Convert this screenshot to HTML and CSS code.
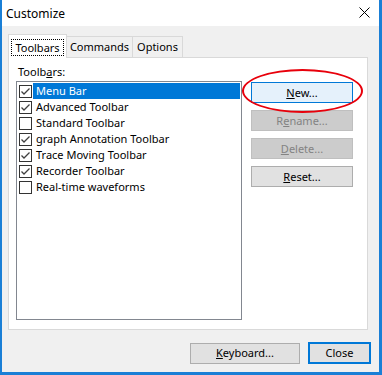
FILE: index.html
```html
<!DOCTYPE html>
<html lang="en">
<head>
    <meta charset="UTF-8">
    <title>Customize</title>
    <link rel="stylesheet" href="styles.css">
</head>
<body>

<div class="dialog">
    <div class="titlebar">
        <span class="title">Customize</span>
        <svg class="close-x" width="11" height="11" viewBox="0 0 11 11">
            <path d="M0.5 0.5 L10.5 10.5 M10.5 0.5 L0.5 10.5" stroke="#000" stroke-width="1" fill="none"/>
        </svg>
    </div>

    <div class="client">
        <div class="tabs">
            <div class="tab active"><span class="focus">Toolbars</span></div>
            <div class="tab">Commands</div>
            <div class="tab">Options</div>
        </div>

        <div class="page">
            <div class="label">Toolb<u>a</u>rs:</div>
            <div class="page-row">
                <div class="listbox">
                    <div class="item selected"><span class="check on"></span><span class="text">Menu Bar</span></div>
                    <div class="item"><span class="check on"></span><span class="text">Advanced Toolbar</span></div>
                    <div class="item"><span class="check"></span><span class="text">Standard Toolbar</span></div>
                    <div class="item"><span class="check on"></span><span class="text">graph Annotation Toolbar</span></div>
                    <div class="item"><span class="check on"></span><span class="text">Trace Moving Toolbar</span></div>
                    <div class="item"><span class="check on"></span><span class="text">Recorder Toolbar</span></div>
                    <div class="item"><span class="check"></span><span class="text">Real-time waveforms</span></div>
                </div>

                <div class="side">
                    <div class="marked">
                        <button class="btn btn-hot"><u>N</u>ew...</button>
                        <span class="ring"></span>
                    </div>
                    <button class="btn" disabled>R<u>e</u>name...</button>
                    <button class="btn" disabled><u>D</u>elete...</button>
                    <button class="btn"><u>R</u>eset...</button>
                </div>
            </div>
        </div>

        <div class="footer">
            <button class="btn btn-keys"><u>K</u>eyboard...</button>
            <button class="btn btn-close">Close</button>
        </div>
    </div>
</div>

</body>
</html>
```

FILE: styles.css
```css
body{
    margin: 0;
    background-color: #fff;
    font-family: "Noto Sans", sans-serif;
    font-size: 11px;
    color: #000;
}

.dialog{
    width: 382px;
    height: 375px;
    box-sizing: border-box;
    border: solid #1a7fd6;
    border-width: 0 3px 3px 2px;
    background-color: #f0f0f0;
    display: flex;
    flex-direction: column;
}

.titlebar{
    height: 26px;
    background-color: #fff;
    display: flex;
    align-items: center;
    justify-content: space-between;
    padding: 0 9px 0 4px;
}

.title{
    font-size: 12px;
}

.close-x{
    margin-top: -1px;
}

.client{
    padding: 8px 0 0 6px;
}

/* tabs */
.tabs{
    display: flex;
    align-items: flex-end;
    position: relative;
    z-index: 1;
    margin-bottom: -1px;
}

.tab{
    height: 21px;
    box-sizing: border-box;
    border: 1px solid #d9d9d9;
    border-left: none;
    border-bottom: none;
    margin-bottom: 1px;
    line-height: 20px;
    text-align: center;
    background-color: #f0f0f0;
}

.tab:nth-child(2){
    width: 66px;
}

.tab:nth-child(3){
    width: 50px;
}

.tab.active{
    width: 59px;
    height: 24px;
    margin-bottom: 0;
    border-left: 1px solid #d9d9d9;
    background-color: #fff;
    line-height: 15px;
}

.focus{
    display: inline-block;
    margin-top: 4px;
    padding: 0 3px 0 3px;
    border: 1px dotted #000;
}

/* page */
.page{
    width: 360px;
    height: 273px;
    box-sizing: border-box;
    border: 1px solid #d9d9d9;
    background-color: #fff;
    padding: 6px 0 0 7px;
}

.label{
    height: 16px;
    line-height: 16px;
    padding-left: 2px;
    margin-bottom: 1px;
}

.page-row{
    display: flex;
    gap: 9px;
}

.listbox{
    width: 226px;
    height: 239px;
    box-sizing: border-box;
    border: 1px solid #828790;
    padding-top: 1px;
}

.item{
    height: 16px;
    display: flex;
    align-items: center;
    padding-left: 2px;
}

.check{
    width: 13px;
    height: 13px;
    box-sizing: border-box;
    border: 1px solid #333;
    background-color: #fff;
    margin-right: 1px;
    flex-shrink: 0;
}

.check.on{
    background: #fff url("data:image/svg+xml,%3Csvg xmlns='http://www.w3.org/2000/svg' width='11' height='11'%3E%3Cpath d='M1.5 5.5 L4 8 L9.5 2.5' stroke='%23404040' stroke-width='1.3' fill='none'/%3E%3C/svg%3E") no-repeat center;
}

.text{
    flex: 1;
    height: 16px;
    line-height: 16px;
    padding-left: 3px;
    margin-right: 1px;
    white-space: nowrap;
}

.item.selected .text{
    background-color: #0078d7;
    color: #fff;
}

/* buttons */
.side{
    display: flex;
    flex-direction: column;
    gap: 7px;
    margin-top: 1px;
}

.btn{
    width: 102px;
    height: 21px;
    box-sizing: border-box;
    border: 1px solid #adadad;
    background-color: #e1e1e1;
    font-family: "Noto Sans", sans-serif;
    font-size: 11px;
    color: #000;
    padding: 0;
    line-height: 18px;
}

.btn:disabled{
    background-color: #cccccc;
    border-color: #bfbfbf;
    color: #838383;
}

.btn-hot{
    border-color: #0078d7;
    background-color: #e5f1fb;
}

.marked{
    position: relative;
    height: 21px;
}

.ring{
    position: absolute;
    left: -9px;
    top: -13px;
    width: 121px;
    height: 44px;
    box-sizing: border-box;
    border: 2.5px solid #e8000b;
    border-radius: 50%;
}

.footer{
    display: flex;
    justify-content: flex-end;
    align-items: center;
    gap: 8px;
    margin-top: 12px;
    padding-right: 8px;
}

.btn-keys{
    width: 110px;
}

.btn-close{
    width: 63px;
    height: 22px;
    border: 2px solid #0078d7;
}
```
